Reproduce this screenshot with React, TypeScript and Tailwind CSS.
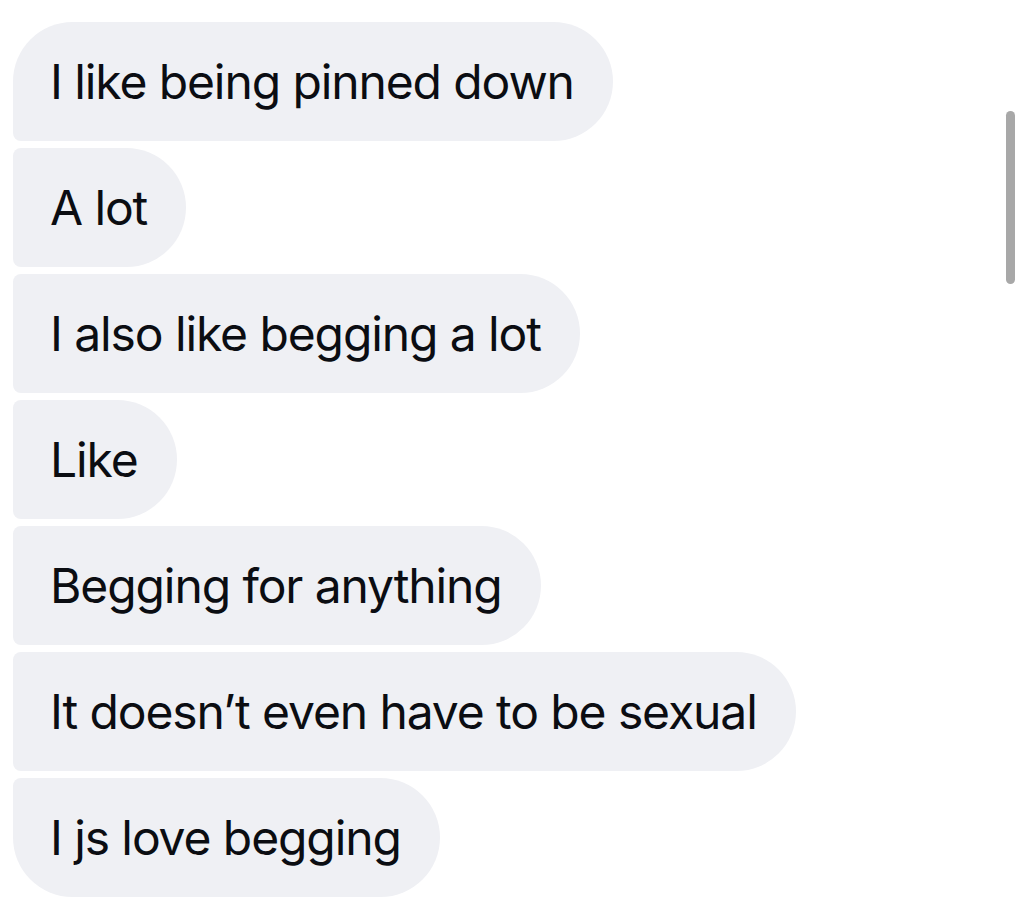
const messages = [
  'I like being pinned down',
  'A lot',
  'I also like begging a lot',
  'Like',
  'Begging for anything',
  'It doesn\u2019t even have to be sexual',
  'I js love begging',
];

export default function App() {
  return (
    <div className="relative w-[1024px] h-[914px] overflow-hidden bg-white" style={{ fontFamily: 'Inter, "Noto Sans", sans-serif' }}>
      <div className="flex flex-col items-start gap-[7px] pt-[22px] pl-[13px]">
        {messages.map((text, i) => {
          const first = i === 0;
          const last = i === messages.length - 1;
          return (
            <div
              key={i}
              className={
                'h-[119px] flex items-center pl-[37px] pr-[39px] bg-[#eff0f4] rounded-r-[60px] ' +
                (first ? 'rounded-tl-[60px] rounded-bl-[8px]' : last ? 'rounded-tl-[8px] rounded-bl-[60px]' : 'rounded-l-[8px]')
              }
            >
              <span className="text-[48px] leading-none tracking-[-1.1px] text-[#0b0d12] whitespace-nowrap">{text}</span>
            </div>
          );
        })}
      </div>

      {/* scrollbar */}
      <div className="absolute left-[1006px] top-[111px] w-[9px] h-[173px] rounded-full bg-[#a8a8a8]" />
    </div>
  );
}
